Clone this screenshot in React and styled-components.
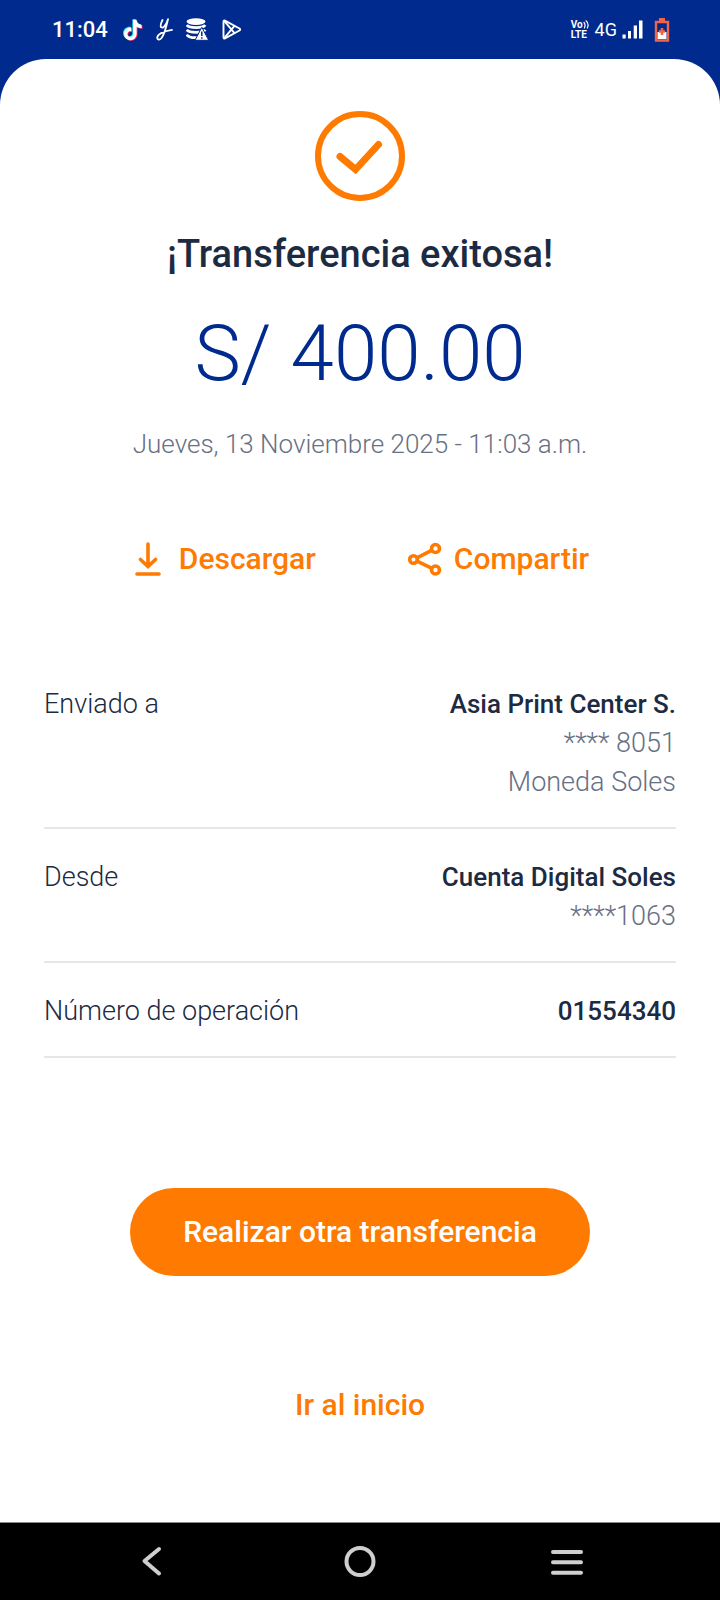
import React from "react";
import styled, { createGlobalStyle } from "styled-components";

const color = {
  brand: "#002a8d",
  accent: "#ff7a00",
  ink: "#1c2a42",
  muted: "#687083",
  line: "#e4e6e9",
};

const GlobalStyle = createGlobalStyle`
  *, *::before, *::after { box-sizing: border-box; }
  body {
    margin: 0;
    background: ${color.brand};
    font-family: Roboto, "Liberation Sans", sans-serif;
    color: ${color.ink};
  }
  h1, p, dl, dt, dd { margin: 0; }
  button { font: inherit; border: 0; background: none; padding: 0; cursor: pointer; }
  svg { display: block; flex: none; }
`;

const Screen = styled.div`
  min-height: 100vh;
  display: flex;
  flex-direction: column;
`;

const StatusBar = styled.header`
  height: 59px;
  padding: 0 50px 0 52px;
  display: flex;
  align-items: center;
  justify-content: space-between;
  color: #fff;
`;

const StatusGroup = styled.div`
  display: flex;
  align-items: center;
  gap: ${(p) => p.$gap}px;
`;

const Clock = styled.time`
  margin-right: 2px;
  font-size: 22px;
  line-height: 24px;
  font-weight: 500;
`;

const Network = styled.span`
  font-size: 18px;
  line-height: 20px;
`;

const Volte = styled.span`
  display: flex;
  flex-direction: column;
  font-size: 10px;
  line-height: 10px;
  font-weight: 700;
`;

const VolteTop = styled.span`
  display: flex;
`;

const Battery = styled.span`
  margin-left: 6px;
`;

const Sheet = styled.main`
  flex: 1;
  display: flex;
  flex-direction: column;
  align-items: center;
  padding: 52px 44px 96px;
  background: #fff;
  border-radius: 46px 46px 0 0;
`;

const Title = styled.h1`
  margin-top: 29px;
  font-size: 38px;
  line-height: 48px;
  font-weight: 500;
  text-align: center;
`;

const Amount = styled.p`
  margin-top: 36px;
  font-size: 78px;
  line-height: 80px;
  font-weight: 300;
  color: ${color.brand};
`;

const DateLine = styled.p`
  margin-top: 34px;
  font-size: 26px;
  line-height: 32px;
  font-weight: 300;
  color: ${color.muted};
  text-align: center;
`;

const Actions = styled.div`
  margin-top: 79px;
  display: flex;
  flex-wrap: wrap;
  justify-content: center;
  gap: 20px 92px;
`;

const ActionButton = styled.button`
  display: flex;
  align-items: center;
  gap: ${(p) => p.$gap}px;
  height: 40px;
  font-size: 30px;
  line-height: 40px;
  font-weight: 500;
  color: ${color.accent};
`;

const Details = styled.dl`
  width: 100%;
  margin-top: 77px;
`;

const DetailRow = styled.div`
  display: flex;
  justify-content: space-between;
  gap: 24px;
  padding: 29px 0 25px;
  border-bottom: 2px solid ${color.line};
  line-height: 39px;
`;

const DetailLabel = styled.dt`
  font-size: 27px;
  font-weight: 300;
`;

const DetailValues = styled.div`
  text-align: right;
`;

const DetailValue = styled.dd`
  font-size: ${(p) => (p.$strong ? 26 : 27)}px;
  font-weight: ${(p) => (p.$strong ? 500 : 300)};
  color: ${(p) => (p.$strong ? color.ink : color.muted)};
`;

const PrimaryButton = styled.button`
  && {
    margin-top: 130px;
    padding: 0 53px;
    min-height: 88px;
    border-radius: 44px;
    background: ${color.accent};
    color: #fff;
    font-size: 30px;
    line-height: 40px;
    font-weight: 500;
  }
`;

const HomeLink = styled.a`
  margin-top: 109px;
  font-size: 30px;
  line-height: 40px;
  font-weight: 500;
  color: ${color.accent};
  text-decoration: none;
`;

const NavBar = styled.nav`
  height: 78px;
  padding: 0 48px;
  display: grid;
  grid-template-columns: repeat(3, 1fr);
  background: #000;
  border-top: 1px solid #8a8a8a;
`;

const NavButton = styled.button`
  display: flex;
  align-items: center;
  justify-content: center;
`;

const NOTE =
  "M12.525.02c1.31-.02 2.61-.01 3.91-.02.08 1.53.63 3.09 1.75 4.17 1.12 1.11 2.7 1.62 4.24 1.79v4.03c-1.44-.05-2.89-.35-4.2-.97-.57-.26-1.1-.59-1.62-.93-.01 2.92.01 5.84-.02 8.75-.08 1.4-.54 2.79-1.35 3.94-1.31 1.92-3.58 3.17-5.91 3.21-1.43.08-2.86-.31-4.08-1.03-2.02-1.19-3.44-3.37-3.65-5.71-.02-.5-.03-1-.01-1.49.18-1.9 1.12-3.72 2.58-4.96 1.66-1.44 3.98-2.13 6.15-1.72.02 1.48-.04 2.96-.04 4.44-.99-.32-2.15-.23-3.02.37-.63.41-1.11 1.04-1.36 1.75-.21.51-.15 1.07-.14 1.61.24 1.64 1.82 3.02 3.5 2.87 1.12-.01 2.19-.66 2.77-1.61.19-.33.4-.67.41-1.06.1-1.79.06-3.57.07-5.36.01-4.03-.01-8.05.02-12.07z";

const TikTokIcon = () => (
  <svg width="20" height="22" viewBox="1 -1 22.5 26" aria-hidden="true">
    <path d={NOTE} fill="#25f4ee" transform="translate(-1 -.8)" />
    <path d={NOTE} fill="#fe2c55" transform="translate(1 .8)" />
    <path d={NOTE} fill="#fff" />
  </svg>
);

const ScriptIcon = () => (
  <svg width="17" height="23" viewBox="0 0 17 23" fill="none" stroke="#fff" strokeWidth="1.8" strokeLinecap="round" strokeLinejoin="round" aria-hidden="true">
    <path d="M6.5 2C5 5 4 8 5.200 9.300C7 10.500 10 7.500 12 1.200C10.500 8 8.500 16 5.500 20C3.500 22.500 1 21.800 1.200 19.500C1.800 15.500 9 13 16 11.800" />
  </svg>
);

const StorageIcon = () => (
  <svg width="23" height="23" viewBox="0 0 23 23" aria-hidden="true">
    <ellipse cx="10" cy="3.600" rx="9.500" ry="3.300" fill="#fff" />
    <g fill="none" stroke="#fff" strokeWidth="2.800">
      <path d="M.8 7C3 10.400 17 10.400 19.200 7" />
      <path d="M.8 11.800C3 15.200 17 15.200 19.200 11.800" />
      <path d="M.8 16.600C3 20.600 15 20.600 19.200 17" />
    </g>
    <path d="M15.800 9.200L22.700 22.300H9z" fill="#fff" stroke={color.brand} strokeWidth="1" />
    <path d="M15.800 13.500v4.500M15.800 19.200v1.600" stroke={color.brand} strokeWidth="1.500" />
  </svg>
);

const PlayIcon = () => (
  <svg width="20" height="21" viewBox="0 0 20 21" fill="none" stroke="#fff" strokeWidth="1.900" strokeLinejoin="round" aria-hidden="true">
    <path d="M1.500 2.500V18.500Q1.500 20 3 19.300L17.500 11.500Q19 10.500 17.500 9.500L3 1.700Q1.500 1 1.500 2.500z" />
    <path d="M2 19.300L12.500 6.900M2 1.700L12.500 14.100" />
  </svg>
);

const WavesIcon = () => (
  <svg width="7" height="9" viewBox="0 0 7 9" fill="none" stroke="#fff" strokeWidth="1.200" strokeLinecap="round" aria-hidden="true">
    <path d="M1 2.500Q2.800 4.500 1.400 8M3 .8Q6.500 4 4.300 8" />
  </svg>
);

const SignalIcon = () => (
  <svg width="21" height="19" viewBox="0 0 21 19" fill="#fff" aria-hidden="true">
    <path d="M.5 14.500h3.200V18.500H.5zM6 11h3v7.500H6zM11.700 5.500h3.300v13h-3.300zM17 .5h3.500v18H17z" />
  </svg>
);

const BatteryIcon = () => (
  <svg width="16" height="24" viewBox="0 0 16 24" aria-hidden="true">
    <path d="M5 0h6v3H5z" fill="#f0654a" />
    <path d="M2 4h12v18.500H2z" fill={color.brand} stroke="#f0654a" strokeWidth="2.400" />
    <path d="M3.500 14h9v7h-9z" fill="#fff" />
    <path d="M8 10v7M4.800 13.500h6.400" stroke="#f0654a" strokeWidth="2.600" />
  </svg>
);

const CheckIcon = () => (
  <svg width="90" height="90" viewBox="0 0 90 90" fill="none" stroke={color.accent} strokeWidth="6" aria-hidden="true">
    <circle cx="45" cy="45" r="42" />
    <path d="M25 45.500L40.500 58.500L63.500 33.500" strokeWidth="7" strokeLinecap="round" />
  </svg>
);

const DownloadIcon = () => (
  <svg width="34" height="34" viewBox="-4 0 34 34" fill="none" stroke={color.accent} strokeWidth="3.600" strokeLinecap="round" aria-hidden="true">
    <path d="M13 2v22M5.500 17.500L13 24.500L20.500 17.500M2 32h22" />
  </svg>
);

const ShareIcon = () => (
  <svg width="34" height="34" viewBox="0 0 34 34" fill="none" stroke={color.accent} strokeWidth="3.600" aria-hidden="true">
    <circle cx="5.500" cy="17.500" r="3.800" />
    <circle cx="27.500" cy="6.500" r="4" />
    <circle cx="27.500" cy="28" r="4" />
    <path d="M9 15.800L24 8.200M9 19.200L24 26.300" />
  </svg>
);

const navIcons = {
  Atrás: <path d="M27 7L12.500 19L27 31.500" strokeLinecap="round" />,
  Inicio: <circle cx="20" cy="19.500" r="13.500" />,
  Recientes: <path d="M5 10h28M5 20.300h28M5 30.700h28" strokeLinecap="round" />,
};

const details = [
  { label: "Enviado a", values: ["Asia Print Center S.", "**** 8051", "Moneda Soles"] },
  { label: "Desde", values: ["Cuenta Digital Soles", "****1063"] },
  { label: "Número de operación", values: ["01554340"] },
];

export default function App() {
  return (
    <Screen>
      <GlobalStyle />
      <StatusBar>
        <StatusGroup $gap={13}>
          <Clock>11:04</Clock>
          <TikTokIcon />
          <ScriptIcon />
          <StorageIcon />
          <PlayIcon />
        </StatusGroup>
        <StatusGroup $gap={5}>
          <Volte>
            <VolteTop>
              Vo
              <WavesIcon />
            </VolteTop>
            LTE
          </Volte>
          <Network>4G</Network>
          <SignalIcon />
          <Battery>
            <BatteryIcon />
          </Battery>
        </StatusGroup>
      </StatusBar>

      <Sheet>
        <CheckIcon />
        <Title>¡Transferencia exitosa!</Title>
        <Amount>S/ 400.00</Amount>
        <DateLine>Jueves, 13 Noviembre 2025 - 11:03 a.m.</DateLine>

        <Actions>
          <ActionButton type="button" $gap={14}>
            <DownloadIcon />
            Descargar
          </ActionButton>
          <ActionButton type="button" $gap={12}>
            <ShareIcon />
            Compartir
          </ActionButton>
        </Actions>

        <Details>
          {details.map(({ label, values }) => (
            <DetailRow key={label}>
              <DetailLabel>{label}</DetailLabel>
              <DetailValues>
                {values.map((value, i) => (
                  <DetailValue key={value} $strong={i === 0}>
                    {value}
                  </DetailValue>
                ))}
              </DetailValues>
            </DetailRow>
          ))}
        </Details>

        <PrimaryButton type="button">Realizar otra transferencia</PrimaryButton>
        <HomeLink href="#inicio">Ir al inicio</HomeLink>
      </Sheet>

      <NavBar aria-label="Sistema">
        {Object.entries(navIcons).map(([label, shape]) => (
          <NavButton key={label} type="button" aria-label={label}>
            <svg width="40" height="40" viewBox="0 0 40 40" fill="none" stroke="#cfcfcf" strokeWidth="4" strokeLinejoin="round" aria-hidden="true">
              {shape}
            </svg>
          </NavButton>
        ))}
      </NavBar>
    </Screen>
  );
}
